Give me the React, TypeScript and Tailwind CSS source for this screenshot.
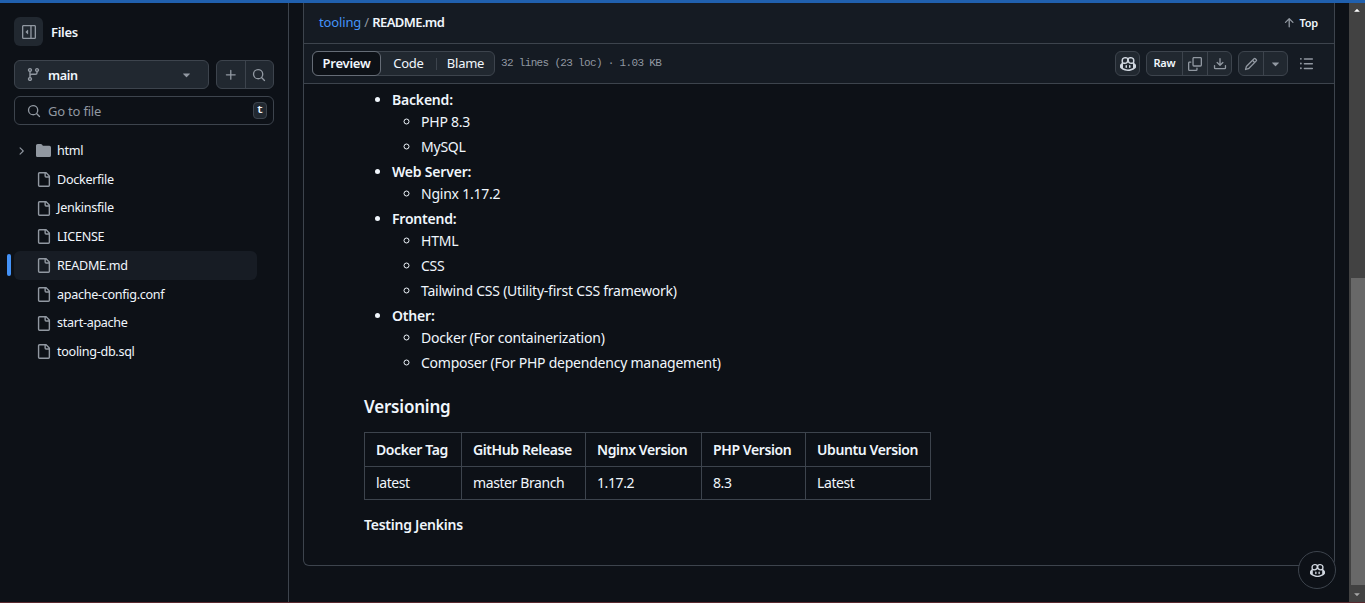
import React from "react";

const P = {
  branch: ["M9.5 3.25a2.25 2.25 0 1 1 3 2.122V6A2.5 2.5 0 0 1 10 8.5H6a1 1 0 0 0-1 1v1.128a2.251 2.251 0 1 1-1.5 0V5.372a2.25 2.25 0 1 1 1.5 0v1.836A2.493 2.493 0 0 1 6 7h4a1 1 0 0 0 1-1v-.628A2.25 2.25 0 0 1 9.5 3.25Zm-6 0a.75.75 0 1 0 1.5 0 .75.75 0 0 0-1.5 0Zm8.25-.75a.75.75 0 1 0 0 1.5.75.75 0 0 0 0-1.5ZM4.25 12a.75.75 0 1 0 0 1.5.75.75 0 0 0 0-1.5Z"],
  caret: ["m4.427 7.427 3.396 3.396a.25.25 0 0 0 .354 0l3.396-3.396A.25.25 0 0 0 11.396 7H4.604a.25.25 0 0 0-.177.427Z"],
  plus: ["M7.75 2a.75.75 0 0 1 .75.75V7h4.25a.75.75 0 0 1 0 1.5H8.5v4.25a.75.75 0 0 1-1.5 0V8.5H2.75a.75.75 0 0 1 0-1.5H7V2.75A.75.75 0 0 1 7.75 2Z"],
  search: ["M10.68 11.74a6 6 0 0 1-7.922-8.982 6 6 0 0 1 8.982 7.922l3.04 3.04a.749.749 0 0 1-.326 1.275.749.749 0 0 1-.734-.215ZM11.5 7a4.499 4.499 0 1 0-8.997 0A4.499 4.499 0 0 0 11.5 7Z"],
  chevron: ["M6.22 3.22a.75.75 0 0 1 1.06 0l4.25 4.25a.75.75 0 0 1 0 1.06l-4.25 4.25a.751.751 0 0 1-1.042-.018.751.751 0 0 1-.018-1.042L9.94 8 6.22 4.28a.75.75 0 0 1 0-1.06Z"],
  folder: ["M1.75 1A1.75 1.75 0 0 0 0 2.75v10.5C0 14.216.784 15 1.75 15h12.5A1.75 1.75 0 0 0 16 13.25v-8.5A1.75 1.75 0 0 0 14.25 3H7.5a.25.25 0 0 1-.2-.1l-.9-1.2C6.07 1.26 5.55 1 5 1H1.75Z"],
  file: ["M2 1.75C2 .784 2.784 0 3.75 0h6.586c.464 0 .909.184 1.237.513l2.914 2.914c.329.328.513.773.513 1.237v9.586A1.75 1.75 0 0 1 13.25 16h-9.5A1.75 1.75 0 0 1 2 14.25Zm1.75-.25a.25.25 0 0 0-.25.25v12.5c0 .138.112.25.25.25h9.5a.25.25 0 0 0 .25-.25V6h-2.75A1.75 1.75 0 0 1 9 4.25V1.5Zm6.75.062V4.25c0 .138.112.25.25.25h2.688l-.011-.013-2.914-2.914-.013-.011Z"],
  up: ["M3.47 7.78a.75.75 0 0 1 0-1.06l4.25-4.25a.75.75 0 0 1 1.06 0l4.25 4.25a.751.751 0 0 1-.018 1.042.751.751 0 0 1-1.042.018L9 4.81v7.44a.75.75 0 0 1-1.5 0V4.81L4.53 7.78a.75.75 0 0 1-1.06 0Z"],
  copy: ["M0 6.75C0 5.784.784 5 1.75 5h1.5a.75.75 0 0 1 0 1.5h-1.5a.25.25 0 0 0-.25.25v7.5c0 .138.112.25.25.25h7.5a.25.25 0 0 0 .25-.25v-1.5a.75.75 0 0 1 1.5 0v1.5A1.75 1.75 0 0 1 9.25 16h-7.5A1.75 1.75 0 0 1 0 14.25Z", "M5 1.75C5 .784 5.784 0 6.75 0h7.5C15.216 0 16 .784 16 1.75v7.5A1.75 1.75 0 0 1 14.25 11h-7.5A1.75 1.75 0 0 1 5 9.25Zm1.75-.25a.25.25 0 0 0-.25.25v7.5c0 .138.112.25.25.25h7.5a.25.25 0 0 0 .25-.25v-7.5a.25.25 0 0 0-.25-.25Z"],
  download: ["M2.75 14A1.75 1.75 0 0 1 1 12.25v-2.5a.75.75 0 0 1 1.5 0v2.5c0 .138.112.25.25.25h10.5a.25.25 0 0 0 .25-.25v-2.5a.75.75 0 0 1 1.5 0v2.5A1.75 1.75 0 0 1 13.25 14Z", "M7.25 7.689V2a.75.75 0 0 1 1.5 0v5.689l1.97-1.969a.749.749 0 1 1 1.06 1.06l-3.25 3.25a.749.749 0 0 1-1.06 0L4.22 6.78a.749.749 0 1 1 1.06-1.06l1.97 1.969Z"],
  pencil: ["M11.013 1.427a1.75 1.75 0 0 1 2.474 0l1.086 1.086a1.75 1.75 0 0 1 0 2.474l-8.61 8.61c-.21.21-.47.364-.756.445l-3.251.93a.75.75 0 0 1-.927-.928l.929-3.25c.081-.286.235-.547.445-.758l8.61-8.61Zm.176 4.823L9.75 4.81l-6.286 6.287a.253.253 0 0 0-.064.108l-.558 1.953 1.953-.558a.253.253 0 0 0 .108-.064Zm1.238-3.763a.25.25 0 0 0-.354 0L10.811 3.75l1.439 1.44 1.263-1.263a.25.25 0 0 0 0-.354Z"],
  list: ["M5.75 2.5h8.5a.75.75 0 0 1 0 1.5h-8.5a.75.75 0 0 1 0-1.5Zm0 5h8.5a.75.75 0 0 1 0 1.5h-8.5a.75.75 0 0 1 0-1.5Zm0 5h8.5a.75.75 0 0 1 0 1.5h-8.5a.75.75 0 0 1 0-1.5ZM2 14a1 1 0 1 1 0-2 1 1 0 0 1 0 2Zm1-6a1 1 0 1 1-2 0 1 1 0 0 1 2 0ZM2 4a1 1 0 1 1 0-2 1 1 0 0 1 0 2Z"],
  copilot: ["M7.998 15.035c-4.562 0-7.873-2.914-7.998-3.749V9.338c.085-.628.677-1.686 1.588-2.065.013-.07.024-.143.036-.218.029-.183.06-.384.126-.612-.201-.508-.254-1.084-.254-1.656 0-.87.128-1.769.693-2.484.579-.733 1.494-1.124 2.724-1.261 1.206-.134 2.262.034 2.944.765.05.053.096.108.139.165.044-.057.094-.112.143-.165.682-.731 1.738-.899 2.944-.765 1.23.137 2.145.528 2.724 1.261.566.715.693 1.614.693 2.484 0 .572-.053 1.148-.254 1.656.066.228.098.429.126.612.012.076.024.148.037.218.924.385 1.522 1.471 1.591 2.095v1.872c0 .766-3.351 3.795-8.002 3.795Zm0-1.485c2.28 0 4.584-1.11 5.002-1.433V7.862l-.023-.116c-.49.21-1.075.291-1.727.291-1.146 0-2.059-.327-2.71-.991A3.222 3.222 0 0 1 8 6.303a3.24 3.24 0 0 1-.544.743c-.65.664-1.563.991-2.71.991-.652 0-1.236-.081-1.727-.291l-.023.116v4.255c.419.323 2.722 1.433 5.002 1.433ZM6.762 2.83c-.193-.206-.637-.413-1.682-.297-1.019.113-1.479.404-1.713.7-.247.312-.369.789-.369 1.554 0 .793.129 1.171.308 1.371.162.181.519.379 1.442.379.853 0 1.339-.235 1.638-.54.315-.322.527-.827.617-1.553.117-.935-.037-1.395-.241-1.614Zm4.155-.297c-1.044-.116-1.488.091-1.681.297-.204.219-.359.679-.242 1.614.091.726.303 1.231.618 1.553.299.305.784.54 1.638.54.922 0 1.28-.198 1.442-.379.179-.2.308-.578.308-1.371 0-.765-.123-1.242-.37-1.554-.233-.296-.693-.587-1.713-.7Z", "M6.25 9.037a.75.75 0 0 1 .75.75v1.501a.75.75 0 0 1-1.5 0V9.787a.75.75 0 0 1 .75-.75Zm4.25.75v1.501a.75.75 0 0 1-1.5 0V9.787a.75.75 0 0 1 1.5 0Z"],
  sidebar: ["M4.177 7.823l2.396-2.396A.25.25 0 0 1 7 5.604v4.792a.25.25 0 0 1-.427.177L4.177 8.177a.25.25 0 0 1 0-.354Z", "M1.75 0h12.5C15.216 0 16 .784 16 1.75v12.5A1.75 1.75 0 0 1 14.25 16H1.75A1.75 1.75 0 0 1 0 14.25V1.75C0 .784.784 0 1.75 0ZM1.5 1.75v12.5c0 .138.112.25.25.25H9.5v-13H1.75a.25.25 0 0 0-.25.25ZM11 14.5h3.25a.25.25 0 0 0 .25-.25V1.75a.25.25 0 0 0-.25-.25H11Z"],
};

function Icon({ name, className = "" }: { name: keyof typeof P; className?: string }) {
  return (
    <svg viewBox="0 0 16 16" fill="currentColor" className={"shrink-0 " + className}>
      {P[name].map((d, i) => (
        <path key={i} d={d} />
      ))}
    </svg>
  );
}

const files = ["Dockerfile", "Jenkinsfile", "LICENSE", "README.md", "apache-config.conf", "start-apache", "tooling-db.sql"];

const stack: [string, string[]][] = [
  ["Backend:", ["PHP 8.3", "MySQL"]],
  ["Web Server:", ["Nginx 1.17.2"]],
  ["Frontend:", ["HTML", "CSS", "Tailwind CSS (Utility-first CSS framework)"]],
  ["Other:", ["Docker (For containerization)", "Composer (For PHP dependency management)"]],
];

const heads = ["Docker Tag", "GitHub Release", "Nginx Version", "PHP Version", "Ubuntu Version"];
const cells = ["latest", "master Branch", "1.17.2", "8.3", "Latest"];
const widths = ["w-[97px]", "w-[124px]", "w-[116px]", "w-[104px]", "w-[125px]"];

function Sidebar() {
  return (
    <aside className="flex w-[289px] shrink-0 flex-col border-r border-[#3d444d] px-[14px] text-[12.6px] tracking-[-0.3px]">
      <div className="mt-[14px] flex items-center gap-2">
        <div className="flex h-[29px] w-[29px] items-center justify-center rounded-md bg-[#212830] text-[#9198a1]">
          <Icon name="sidebar" className="h-[14px] w-[14px]" />
        </div>
        <span className="pt-[2px] text-[13px] font-semibold text-[#f0f6fc]">Files</span>
      </div>
      <div className="mt-[14px] flex gap-[7px]">
        <div className="flex h-[29px] w-[195px] items-center rounded-md border border-[#3d444d] bg-[#212830] pl-[11px] pr-[14px] text-[#f0f6fc]">
          <Icon name="branch" className="h-[15px] w-[15px] text-[#9198a1]" />
          <span className="ml-[7px] flex-1 pt-[4px] font-semibold">main</span>
          <Icon name="caret" className="h-[15px] w-[15px] text-[#9198a1]" />
        </div>
        <div className="flex h-[29px] w-[58px] overflow-hidden rounded-md border border-[#3d444d] bg-[#212830] text-[#9198a1]">
          <div className="flex flex-1 items-center justify-center border-r border-[#3d444d]">
            <Icon name="plus" className="h-[14px] w-[14px]" />
          </div>
          <div className="flex flex-1 items-center justify-center">
            <Icon name="search" className="h-[14px] w-[14px]" />
          </div>
        </div>
      </div>
      <div className="mt-[7px] flex h-[29px] items-center rounded-md border border-[#3d444d] bg-[#0d1117] pl-[12px] pr-[6px]">
        <Icon name="search" className="h-[14px] w-[14px] text-[#9198a1]" />
        <span className="ml-[7px] flex-1 pt-[2px] text-[13px] tracking-[-0.2px] text-[#9198a1]">Go to file</span>
        <span className="flex h-[17px] w-[14px] items-center justify-center rounded-[4px] border border-[#3d444d] bg-[#212830] font-['Liberation_Mono',monospace] text-[11px] font-bold text-[#f0f6fc]">
          t
        </span>
      </div>
      <div className="mt-[11px] flex flex-col">
        <div className="flex h-[29px] items-center">
          <Icon name="chevron" className="ml-[1px] h-[12px] w-[12px] text-[#9198a1]" />
          <Icon name="folder" className="ml-[9px] h-[15px] w-[15px] text-[#9198a1]" />
          <span className="ml-[6px] pt-[2px] text-[#f0f6fc]">html</span>
        </div>
        {files.map((f) => {
          const on = f === "README.md";
          return (
            <div key={f} className={"relative flex h-[28.75px] w-[243px] items-center rounded-md " + (on ? "bg-[#171c24]" : "")}>
              {on && <span className="absolute -left-[7px] top-[3px] h-[22px] w-[4px] rounded-full bg-[#4493f8]" />}
              <Icon name="file" className="ml-[22px] h-[15px] w-[15px] text-[#9198a1]" />
              <span className="ml-[6px] pt-[1.6px] text-[#f0f6fc]">{f}</span>
            </div>
          );
        })}
      </div>
    </aside>
  );
}

function Toolbar() {
  return (
    <div className="flex h-[40px] items-center border-b border-[#3d444d] bg-[#151b23] pl-[8px] pr-[20px]">
      <div className="flex h-[25px] w-[183px] items-center rounded-md border border-[#3d444d] bg-[#212830] text-[13px] tracking-[-0.25px] text-[#f0f6fc]">
        <div className="-ml-px flex h-[25px] w-[69px] items-center justify-center rounded-md border border-[#656c76] bg-[#0d1117] font-semibold">Preview</div>
        <div className="flex w-[55px] justify-center">Code</div>
        <div className="h-[12px] w-px bg-[#3d444d]" />
        <div className="flex flex-1 justify-center">Blame</div>
      </div>
      <span className="ml-[6px] font-['Liberation_Mono',monospace] text-[11px] tracking-[-0.67px] text-[#9198a1]">32 lines (23 loc) · 1.03 KB</span>
      <div className="flex-1" />
      <div className="flex h-[25px] w-[25px] items-center justify-center rounded-md border border-[#3d444d] bg-[#212830] text-[#d1d7e0]">
        <Icon name="copilot" className="h-[16px] w-[16px]" />
      </div>
      <div className="ml-[6px] flex h-[25px] w-[86px] overflow-hidden rounded-md border border-[#3d444d] bg-[#212830] text-[#9198a1]">
        <div className="flex w-[36px] items-center justify-center border-r border-[#3d444d] text-[11px] font-semibold tracking-[-0.2px] text-[#f0f6fc]">Raw</div>
        <div className="flex w-[25px] items-center justify-center border-r border-[#3d444d]">
          <Icon name="copy" className="h-[14px] w-[14px]" />
        </div>
        <div className="flex flex-1 items-center justify-center">
          <Icon name="download" className="h-[14px] w-[14px]" />
        </div>
      </div>
      <div className="ml-[6px] flex h-[25px] w-[50px] overflow-hidden rounded-md border border-[#3d444d] bg-[#212830] text-[#9198a1]">
        <div className="flex w-[25px] items-center justify-center border-r border-[#3d444d]">
          <Icon name="pencil" className="h-[14px] w-[14px]" />
        </div>
        <div className="flex flex-1 items-center justify-center">
          <Icon name="caret" className="h-[15px] w-[15px]" />
        </div>
      </div>
      <Icon name="list" className="ml-[11px] h-[15px] w-[15px] text-[#9198a1]" />
    </div>
  );
}

function Readme() {
  return (
    <div className="pl-[60px] pt-[5px] text-[14px] tracking-[-0.2px] text-[#f0f6fc]">
      <ul className="list-disc pl-[28px]">
        {stack.map(([t, subs], i) => (
          <li key={t} className={i ? "mt-[4px]" : ""}>
            <div className="h-[21px] font-semibold leading-[21px]">{t}</div>
            <ul className="list-[circle] pl-[29px]">
              {subs.map((s, j) => (
                <li key={s} className={"h-[21px] leading-[21px] tracking-[-0.23px] " + (j ? "mt-[4px]" : "mt-px")}>
                  {s}
                </li>
              ))}
            </ul>
          </li>
        ))}
      </ul>
      <h3 className="mt-[23px] text-[17px] font-semibold leading-[22px]">Versioning</h3>
      <table className="mt-[14px] w-[566px] table-fixed border-collapse whitespace-nowrap tracking-[-0.4px]">
        <thead>
          <tr>
            {heads.map((h, i) => (
              <th key={h} className={"h-[34px] border border-[#3d444d] px-[11px] text-left font-semibold " + widths[i]}>
                {h}
              </th>
            ))}
          </tr>
        </thead>
        <tbody>
          <tr>
            {cells.map((c) => (
              <td key={c} className="h-[33px] border border-[#3d444d] px-[11px] pb-[2px]">
                {c}
              </td>
            ))}
          </tr>
        </tbody>
      </table>
      <p className="mt-[14px] h-[21px] font-semibold leading-[21px] tracking-[-0.25px]">Testing Jenkins</p>
      <div className="h-[30px]" />
    </div>
  );
}

function Scrollbar() {
  return (
    <div className="flex w-[16px] shrink-0 flex-col items-end bg-[#424242]">
      <div className="flex h-[16px] w-full items-center justify-center">
        <Icon name="caret" className="h-[12px] w-[12px] rotate-180 text-white" />
      </div>
      <div className="mt-[259px] h-[307px] w-[14px] bg-[#686868]" />
      <div className="flex w-full flex-1 items-center justify-center">
        <Icon name="caret" className="h-[12px] w-[12px] text-[#a8a8a8]" />
      </div>
    </div>
  );
}

export default function App() {
  return (
    <div className="relative flex h-[603px] w-[1365px] flex-col overflow-hidden bg-[#0d1117] font-['Noto_Sans',sans-serif]">
      <div className="h-[3px] shrink-0 bg-[#2060ae]" />
      <div className="flex min-h-0 flex-1">
        <Sidebar />
        <main className="min-w-0 flex-1 pl-[14px] pr-[14px]">
          <div className="rounded-b-md border-x border-b border-[#3d444d]">
            <div className="flex h-[41px] items-center justify-between border-b border-[#3d444d] bg-[#151b23] pl-[15px] pr-[16px]">
              <div className="text-[13px] tracking-[-0.15px]">
                <span className="text-[#4493f8]">tooling</span>
                <span className="text-[#9198a1]"> / </span>
                <span className="font-semibold tracking-[-0.6px] text-[#f0f6fc]">README.md</span>
              </div>
              <div className="flex items-center gap-[3px] text-[11px] font-semibold tracking-[-0.2px] text-[#f0f6fc]">
                <Icon name="up" className="h-[14px] w-[14px] text-[#9198a1]" />
                Top
              </div>
            </div>
            <Toolbar />
            <Readme />
          </div>
        </main>
        <Scrollbar />
      </div>
      <div className="h-px shrink-0 bg-[#5a2a30]" />
      <div className="absolute left-[1298px] top-[551px] flex h-[38px] w-[38px] items-center justify-center rounded-full border border-[#3d444d] bg-[#0d1117] text-[#d1d7e0]">
        <Icon name="copilot" className="h-[15px] w-[15px]" />
      </div>
    </div>
  );
}
